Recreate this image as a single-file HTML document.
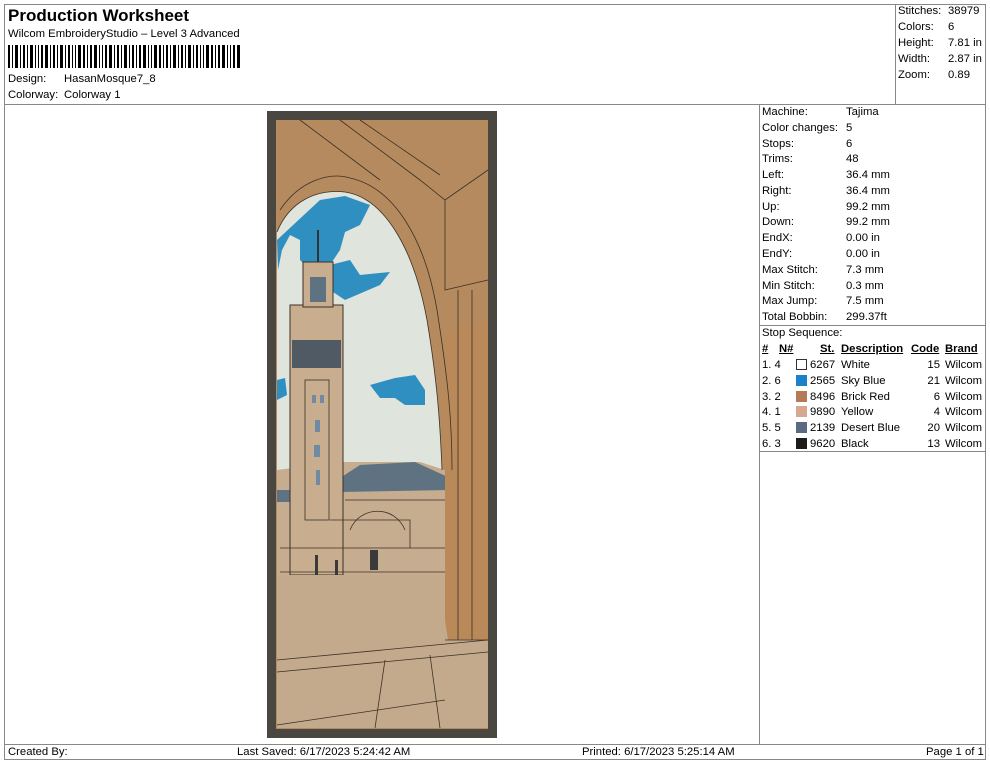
<!DOCTYPE html>
<html><head><meta charset="utf-8"><style>
body{margin:0;width:990px;height:762px;background:#fff;font-family:"Liberation Sans",Arial,sans-serif;color:#000;position:relative;overflow:hidden}
.t{position:absolute;font-size:11.3px;line-height:13px;white-space:nowrap}
.l{position:absolute;background:#888}
</style></head><body>
<div class="l" style="left:4px;top:4px;width:982px;height:1px"></div>
<div class="l" style="left:4px;top:4px;width:1px;height:756px"></div>
<div class="l" style="left:985px;top:4px;width:1px;height:756px"></div>
<div class="l" style="left:4px;top:104px;width:982px;height:1px"></div>
<div class="l" style="left:4px;top:744px;width:982px;height:1px"></div>
<div class="l" style="left:4px;top:759px;width:982px;height:1px"></div>
<div class="l" style="left:895px;top:4px;width:1px;height:100px"></div>
<div class="l" style="left:759px;top:104px;width:1px;height:640px"></div>
<div class="l" style="left:759px;top:325px;width:227px;height:1px"></div>
<div class="l" style="left:759px;top:451px;width:227px;height:1px"></div>

<div class="t" style="left:8px;top:6px;font-size:17px;line-height:20px;font-weight:bold">Production Worksheet</div>
<div class="t" style="left:8px;top:28px">Wilcom EmbroideryStudio – Level 3 Advanced</div>
<svg style="position:absolute;left:8px;top:45px" width="232" height="23">
<g fill="#000">
<rect x="0" width="2" height="23"/><rect x="4" width="1" height="23"/><rect x="7" width="3" height="23"/><rect x="12" width="1" height="23"/><rect x="15" width="2" height="23"/><rect x="19" width="1" height="23"/><rect x="22" width="3" height="23"/><rect x="27" width="1" height="23"/><rect x="30" width="1" height="23"/><rect x="33" width="2" height="23"/><rect x="37" width="3" height="23"/><rect x="42" width="1" height="23"/><rect x="45" width="2" height="23"/><rect x="49" width="1" height="23"/><rect x="52" width="3" height="23"/><rect x="57" width="1" height="23"/><rect x="60" width="2" height="23"/><rect x="64" width="1" height="23"/><rect x="67" width="1" height="23"/><rect x="70" width="3" height="23"/><rect x="75" width="2" height="23"/><rect x="79" width="1" height="23"/><rect x="82" width="2" height="23"/><rect x="86" width="3" height="23"/><rect x="91" width="1" height="23"/><rect x="94" width="1" height="23"/><rect x="97" width="2" height="23"/><rect x="101" width="3" height="23"/><rect x="106" width="1" height="23"/><rect x="109" width="2" height="23"/><rect x="113" width="1" height="23"/><rect x="116" width="3" height="23"/><rect x="121" width="1" height="23"/><rect x="124" width="2" height="23"/><rect x="128" width="1" height="23"/><rect x="131" width="2" height="23"/><rect x="135" width="3" height="23"/><rect x="140" width="1" height="23"/><rect x="143" width="1" height="23"/><rect x="146" width="3" height="23"/><rect x="151" width="2" height="23"/><rect x="155" width="1" height="23"/><rect x="158" width="2" height="23"/><rect x="162" width="1" height="23"/><rect x="165" width="3" height="23"/><rect x="170" width="1" height="23"/><rect x="173" width="2" height="23"/><rect x="177" width="1" height="23"/><rect x="180" width="3" height="23"/><rect x="185" width="1" height="23"/><rect x="188" width="2" height="23"/><rect x="192" width="1" height="23"/><rect x="195" width="1" height="23"/><rect x="198" width="3" height="23"/><rect x="203" width="2" height="23"/><rect x="207" width="1" height="23"/><rect x="210" width="2" height="23"/><rect x="214" width="3" height="23"/><rect x="219" width="1" height="23"/><rect x="222" width="1" height="23"/><rect x="225" width="2" height="23"/><rect x="229" width="3" height="23"/>
</g></svg>
<div class="t" style="left:8px;top:73px">Design:</div><div class="t" style="left:64px;top:73px">HasanMosque7_8</div>
<div class="t" style="left:8px;top:89px">Colorway:</div><div class="t" style="left:64px;top:89px">Colorway 1</div>

<div class="t" style="left:898px;top:5px">Stitches:</div><div class="t" style="left:948px;top:5px">38979</div>
<div class="t" style="left:898px;top:21px">Colors:</div><div class="t" style="left:948px;top:21px">6</div>
<div class="t" style="left:898px;top:37px">Height:</div><div class="t" style="left:948px;top:37px">7.81 in</div>
<div class="t" style="left:898px;top:53px">Width:</div><div class="t" style="left:948px;top:53px">2.87 in</div>
<div class="t" style="left:898px;top:69px">Zoom:</div><div class="t" style="left:948px;top:69px">0.89</div>

<div style="position:absolute;left:762px;top:106px">
<div class="t" style="left:0;top:0">Machine:</div><div class="t" style="left:84px;top:0">Tajima</div>
<div class="t" style="left:0;top:16px">Color changes:</div><div class="t" style="left:84px;top:16px">5</div>
<div class="t" style="left:0;top:32px">Stops:</div><div class="t" style="left:84px;top:32px">6</div>
<div class="t" style="left:0;top:47px">Trims:</div><div class="t" style="left:84px;top:47px">48</div>
<div class="t" style="left:0;top:63px">Left:</div><div class="t" style="left:84px;top:63px">36.4 mm</div>
<div class="t" style="left:0;top:79px">Right:</div><div class="t" style="left:84px;top:79px">36.4 mm</div>
<div class="t" style="left:0;top:95px">Up:</div><div class="t" style="left:84px;top:95px">99.2 mm</div>
<div class="t" style="left:0;top:110px">Down:</div><div class="t" style="left:84px;top:110px">99.2 mm</div>
<div class="t" style="left:0;top:126px">EndX:</div><div class="t" style="left:84px;top:126px">0.00 in</div>
<div class="t" style="left:0;top:142px">EndY:</div><div class="t" style="left:84px;top:142px">0.00 in</div>
<div class="t" style="left:0;top:158px">Max Stitch:</div><div class="t" style="left:84px;top:158px">7.3 mm</div>
<div class="t" style="left:0;top:174px">Min Stitch:</div><div class="t" style="left:84px;top:174px">0.3 mm</div>
<div class="t" style="left:0;top:189px">Max Jump:</div><div class="t" style="left:84px;top:189px">7.5 mm</div>
<div class="t" style="left:0;top:205px">Total Bobbin:</div><div class="t" style="left:84px;top:205px">299.37ft</div>
<div class="t" style="left:0;top:221px">Stop Sequence:</div>
</div>
<div style="position:absolute;left:762px;top:343px">
<div class="t" style="left:0;top:0;font-weight:bold;text-decoration:underline">#</div>
<div class="t" style="left:17px;top:0;font-weight:bold;text-decoration:underline">N#</div>
<div class="t" style="left:58px;top:0;font-weight:bold;text-decoration:underline">St.</div>
<div class="t" style="left:79px;top:0;font-weight:bold;text-decoration:underline">Description</div>
<div class="t" style="left:149px;top:0;font-weight:bold;text-decoration:underline">Code</div>
<div class="t" style="left:183px;top:0;font-weight:bold;text-decoration:underline">Brand</div>
</div>
<div style="position:absolute;left:762px;top:359px">
<div class="t" style="top:0">1. 4</div><div class="t" style="top:16px">2. 6</div><div class="t" style="top:32px">3. 2</div><div class="t" style="top:47px">4. 1</div><div class="t" style="top:63px">5. 5</div><div class="t" style="top:79px">6. 3</div>
<div style="position:absolute;left:34px;top:0px;width:9px;height:9px;border:1px solid #333;background:#fff"></div>
<div style="position:absolute;left:34px;top:16px;width:11px;height:11px;background:#1a82c8"></div>
<div style="position:absolute;left:34px;top:32px;width:11px;height:11px;background:#b57a56"></div>
<div style="position:absolute;left:34px;top:47px;width:11px;height:11px;background:#d6a892"></div>
<div style="position:absolute;left:34px;top:63px;width:11px;height:11px;background:#5a6a82"></div>
<div style="position:absolute;left:34px;top:79px;width:11px;height:11px;background:#1e1c1a"></div>
<div class="t" style="left:48px;top:0">6267</div><div class="t" style="left:48px;top:16px">2565</div><div class="t" style="left:48px;top:32px">8496</div><div class="t" style="left:48px;top:47px">9890</div><div class="t" style="left:48px;top:63px">2139</div><div class="t" style="left:48px;top:79px">9620</div>
<div class="t" style="left:79px;top:0">White</div><div class="t" style="left:79px;top:16px">Sky Blue</div><div class="t" style="left:79px;top:32px">Brick Red</div><div class="t" style="left:79px;top:47px">Yellow</div><div class="t" style="left:79px;top:63px">Desert Blue</div><div class="t" style="left:79px;top:79px">Black</div>
<div class="t" style="left:150px;top:0;width:28px;text-align:right">15</div><div class="t" style="left:150px;top:16px;width:28px;text-align:right">21</div><div class="t" style="left:150px;top:32px;width:28px;text-align:right">6</div><div class="t" style="left:150px;top:47px;width:28px;text-align:right">4</div><div class="t" style="left:150px;top:63px;width:28px;text-align:right">20</div><div class="t" style="left:150px;top:79px;width:28px;text-align:right">13</div>
<div class="t" style="left:183px;top:0">Wilcom</div><div class="t" style="left:183px;top:16px">Wilcom</div><div class="t" style="left:183px;top:32px">Wilcom</div><div class="t" style="left:183px;top:47px">Wilcom</div><div class="t" style="left:183px;top:63px">Wilcom</div><div class="t" style="left:183px;top:79px">Wilcom</div>
</div>

<div class="t" style="left:8px;top:746px">Created By:</div>
<div class="t" style="left:237px;top:746px">Last Saved: 6/17/2023 5:24:42 AM</div>
<div class="t" style="left:582px;top:746px">Printed: 6/17/2023 5:25:14 AM</div>
<div class="t" style="left:926px;top:746px">Page 1 of 1</div>

<svg style="position:absolute;left:0;top:0" width="990" height="762">
<rect x="267" y="111" width="230" height="627" fill="#4a4640"/>
<rect x="276" y="120" width="212" height="609" fill="#b58a5e"/>
<path d="M277,600 L277,232 C290,200 318,189 345,192 C385,198 414,250 427,320 C437,380 440,420 442,470 L442,600 Z" fill="#dfe4dc"/>
<path d="M320,200 L345,196 L370,205 L360,225 L345,232 L340,250 L330,265 L350,260 L360,275 L390,272 L380,285 L345,300 L330,290 L300,260 L300,240 L290,235 L282,250 L278,270 L277,240 Z" fill="#2f8fc0"/>
<path d="M370,385 L395,378 L415,375 L425,390 L425,405 L405,405 L395,398 L380,398 Z" fill="#2f8fc0"/>
<path d="M277,380 L285,378 L287,395 L277,400 Z" fill="#2f8fc0"/>
<path d="M277,470 L340,462 L420,462 L445,470 L445,580 L277,580 Z" fill="#c6ad8f"/>
<path d="M340,478 L360,465 L415,462 L450,478 L450,490 L340,492 Z" fill="#5e7282"/>
<rect x="277" y="490" width="14" height="12" fill="#5e7282"/>
<rect x="290" y="305" width="53" height="270" fill="#c8ae8e" stroke="#3a3028" stroke-width="1"/>
<rect x="292" y="340" width="49" height="28" fill="#4f5a64"/>
<rect x="303" y="262" width="30" height="45" fill="#c8ae8e" stroke="#3a3028"/>
<rect x="310" y="277" width="16" height="25" fill="#5e7282"/>
<path d="M318,230 L318,262" stroke="#333" stroke-width="2"/>
<rect x="305" y="380" width="24" height="140" fill="none" stroke="#3a3028" stroke-width="0.8"/>
<g fill="#6f8aa3"><rect x="312" y="395" width="4" height="8"/><rect x="320" y="395" width="4" height="8"/><rect x="315" y="420" width="5" height="12"/><rect x="314" y="445" width="6" height="12"/><rect x="316" y="470" width="4" height="15"/></g>
<rect x="277" y="575" width="211" height="153" fill="#c3aa8c"/>
<path d="M445,330 L488,320 L488,640 L448,640 L445,620 Z" fill="#b9895a"/>
<g stroke="#3c3026" stroke-width="0.8" fill="none">
<path d="M277,232 C290,200 318,189 345,192 C385,198 414,250 427,320 C437,380 440,420 442,470"/>
<path d="M280,210 C300,180 330,172 350,178 C395,188 425,240 437,310 C448,380 452,420 452,470"/>
<path d="M340,120 L420,180 L445,200 L488,170 M445,200 L445,290 L488,280 M360,120 L440,175 M300,120 L380,180"/>
<path d="M458,290 L458,640 M472,290 L472,640 M445,640 L488,640"/>
<path d="M280,548 L445,548 M280,572 L445,572 M330,520 L410,520 L410,548 M350,530 C360,505 395,505 405,530"/>
<path d="M277,660 L488,640 M277,672 L488,652 M385,660 L375,728 M430,655 L440,728 M277,725 L445,700"/>
<path d="M345,500 L445,500"/>
</g>
<g fill="#3a3a3a"><rect x="315" y="555" width="3" height="20"/><rect x="335" y="560" width="3" height="15"/><rect x="370" y="550" width="8" height="20"/></g>
</svg>
</body></html>
